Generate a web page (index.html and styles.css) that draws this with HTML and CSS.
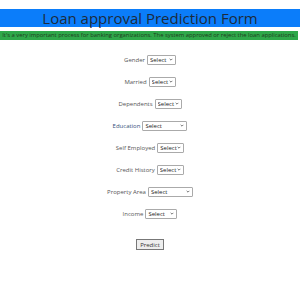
FILE: index.html
```html
<!DOCTYPE html>
<html lang="en">
<head>
  <meta charset="UTF-8">
  <meta name="viewport" content="width=device-width, initial-scale=1.0">
  <title>Loan approval Prediction Form</title>
  <link rel="stylesheet" href="styles.css">
</head>
<body>

<h1 class="title">Loan approval Prediction Form</h1>
<p class="intro">It's a very important process for banking organizations. The system approved or reject the loan applications.</p>

<form class="loan-form">
  <div class="row">
    <label for="gender">Gender</label>
    <select id="gender" class="sm">
      <option>Select</option>
      <option>Male</option>
      <option>Female</option>
    </select>
  </div>
  <div class="row">
    <label for="married">Married</label>
    <select id="married" class="xs">
      <option>Select</option>
      <option>Yes</option>
      <option>No</option>
    </select>
  </div>
  <div class="row">
    <label for="dependents">Dependents</label>
    <select id="dependents" class="xs">
      <option>Select</option>
      <option>0</option>
      <option>1</option>
      <option>2</option>
      <option>3+</option>
    </select>
  </div>
  <div class="row">
    <label for="education" class="edu">Education</label>
    <select id="education" class="lg">
      <option>Select</option>
      <option>Graduate</option>
      <option>Not Graduate</option>
    </select>
  </div>
  <div class="row">
    <label for="self_employed">Self Employed</label>
    <select id="self_employed" class="xs">
      <option>Select</option>
      <option>Yes</option>
      <option>No</option>
    </select>
  </div>
  <div class="row">
    <label for="credit">Credit History</label>
    <select id="credit" class="xs">
      <option>Select</option>
      <option>1</option>
      <option>0</option>
    </select>
  </div>
  <div class="row">
    <label for="property">Property Area</label>
    <select id="property" class="lg">
      <option>Select</option>
      <option>Urban</option>
      <option>Semiurban</option>
      <option>Rural</option>
    </select>
  </div>
  <div class="row">
    <label for="income">Income</label>
    <select id="income" class="md">
      <option>Select</option>
      <option>Low</option>
      <option>Medium</option>
      <option>High</option>
    </select>
  </div>
  <div class="row submit">
    <button type="submit">Predict</button>
  </div>
</form>

</body>
</html>
```

FILE: styles.css
```css
body {
  font-family: "Open Sans", "Noto Sans", sans-serif;
  margin: 0;
  padding: 9px 0 0 0;
  background-color: #fff;
  color: #555;
}
.title {
  background-color: #0b7dfa;
  color: #1c2b3c;
  font-size: 15px;
  font-weight: normal;
  line-height: 18px;
  text-align: center;
  margin: 0;
}
.intro {
  background-color: #2fa84a;
  color: #1f3d20;
  font-size: 5.85px;
  line-height: 9px;
  text-align: center;
  margin: 4px 2px 0 0;
  white-space: nowrap;
}
.loan-form {
  display: flex;
  flex-direction: column;
  align-items: center;
  gap: 11px;
  padding-top: 14px;
}
.row {
  display: flex;
  align-items: center;
  gap: 2px;
  height: 11px;
}
.row label {
  font-size: 6px;
  color: #555;
}
.row .edu {
  color: #34507a;
}
select {
  -webkit-appearance: none;
  appearance: none;
  font-family: inherit;
  font-size: 6px;
  height: 10px;
  line-height: 8px;
  padding: 0 0 0 2px;
  border: 1px solid #aaa;
  border-radius: 1px;
  color: #222;
  background: #fff url("data:image/svg+xml;utf8,<svg xmlns='http://www.w3.org/2000/svg' width='6' height='4' viewBox='0 0 6 4'><path d='M1 1 L3 3 L5 1' fill='none' stroke='%23333' stroke-width='1'/></svg>") no-repeat right 2px center;
  background-size: 4px 3px;
}
select.xs { width: 27px; }
select.sm { width: 29px; }
select.md { width: 32px; }
select.lg { width: 45px; }
.submit {
  margin-top: 9px;
}
button {
  font-family: inherit;
  font-size: 6px;
  height: 11px;
  padding: 0 3px;
  border: 1px solid #777;
  border-radius: 0;
  background-color: #eee;
  color: #333;
}
```
